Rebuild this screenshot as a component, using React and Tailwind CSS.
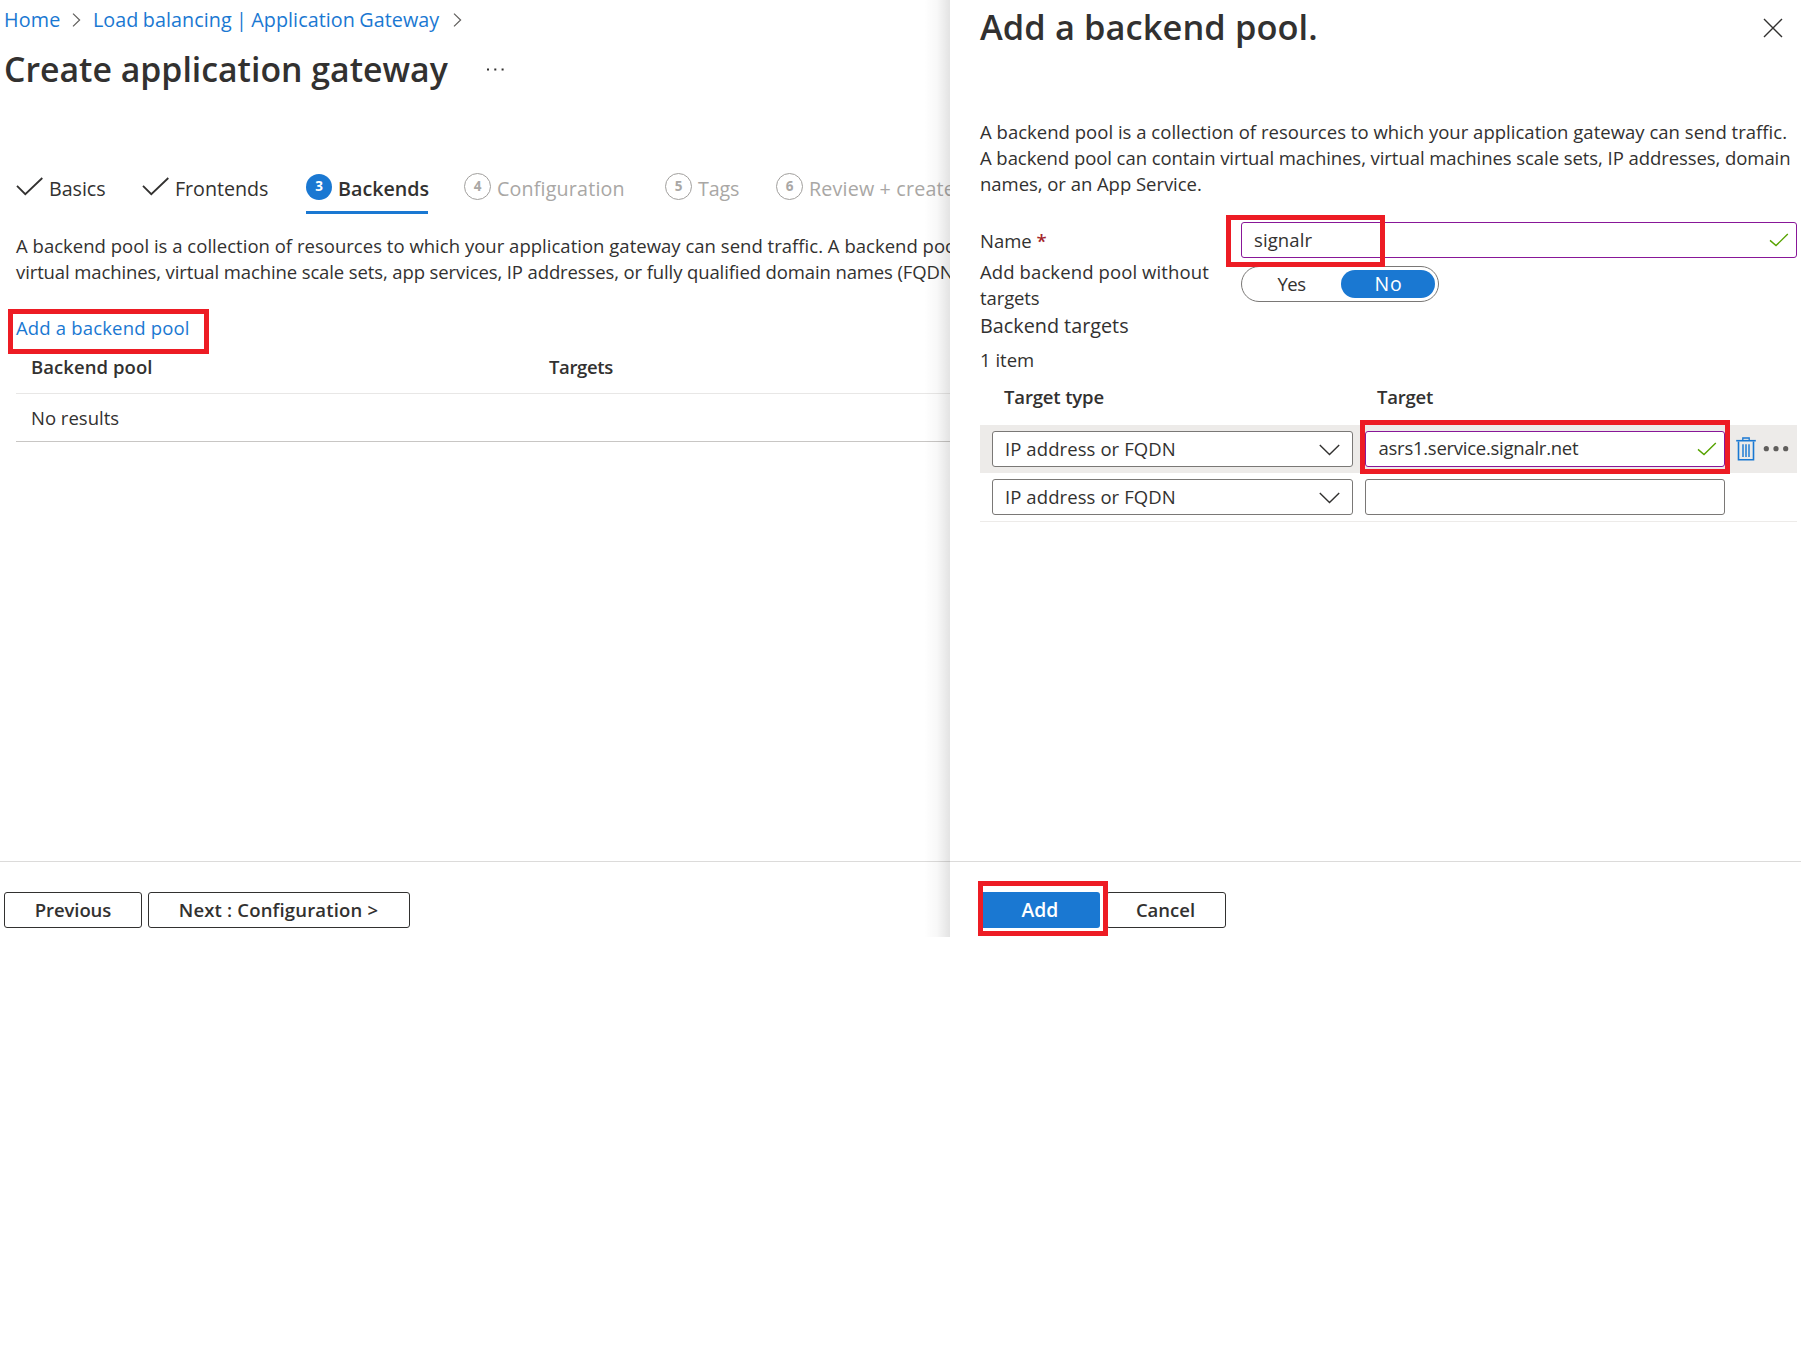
const tabBase = "flex h-[40px] shrink-0 items-start whitespace-nowrap text-[19.7px] leading-[28px]";

function Tick() {
  return (
    <svg className="mt-[3px] h-[19px] w-[28px] shrink-0" viewBox="0 0 28 19" fill="none" stroke="#323130" strokeWidth="1.8">
      <path d="M1 8.8 9.3 17.2 26.3 1" />
    </svg>
  );
}

function ValidTick() {
  return (
    <svg className="h-[14px] w-[20px] shrink-0" viewBox="0 0 20 14" fill="none" stroke="#57a300" strokeWidth="1.4">
      <path d="M1 7.4 7 12.6 18.8 1" />
    </svg>
  );
}

function CrumbChevron({ className }) {
  return (
    <svg className={"h-[14px] w-[9px] shrink-0 " + className} viewBox="0 0 9 14" fill="none" stroke="#605e5c" strokeWidth="1.2">
      <path d="M1 .6 7.6 7 1 13.4" />
    </svg>
  );
}

function StepNumber({ n }) {
  return (
    <span className="-mt-px flex h-[27px] w-[27px] shrink-0 items-center justify-center rounded-full border border-[#a19f9d] text-[13.5px] font-bold leading-none text-[#a9a7a5]">
      {n}
    </span>
  );
}

function TypeSelect() {
  return (
    <div className="flex h-[36px] w-[361px] shrink-0 items-center justify-between rounded-[3px] border border-[#7a7876] bg-white pl-[12px] pr-[12px]">
      <span className="tracking-[0.09px]">IP address or FQDN</span>
      <svg className="mt-px h-[12px] w-[21px]" viewBox="0 0 21 12" fill="none" stroke="#323130" strokeWidth="1.4">
        <path d="M.8 1 10.5 10.5 20.2 1" />
      </svg>
    </div>
  );
}

function Highlight({ className }) {
  return <div className={"pointer-events-none absolute z-20 border-[5px] border-[#ed1c24] " + className} />;
}

function GatewayPage() {
  return (
    <main className="relative flex h-full w-[950px] shrink-0 flex-col overflow-hidden">
      <nav className="mt-[7px] flex h-[26px] items-center pl-[4px] text-[19.75px] leading-[26px] text-[#1a78d2]">
        <span className="w-[57px] tracking-[0.2px]">Home</span>
        <CrumbChevron className="ml-[11px] mr-[12px]" />
        <span className="w-[350px] whitespace-nowrap [word-spacing:-0.9px] tracking-[0.06px]">Load balancing | Application Gateway</span>
        <CrumbChevron className="ml-[10px]" />
      </nav>
      <div className="mt-[12px] flex h-[48px] pl-[4px]">
        <h1 className="w-[483px] text-[33.8px] font-[570] leading-[48px]">Create application gateway</h1>
        <svg className="mt-[23px] h-[3px] w-[18px]" viewBox="0 0 18 3" fill="#323130">
          <path d="M0 .5h2v2H0zM7.3.5h2v2h-2zM14.6.5h2v2h-2z" />
        </svg>
      </div>

      <div className="mt-[81px] flex pl-[16px]">
        <div className={tabBase + " w-[126px]"}>
          <Tick />
          <span className="ml-[5px] mt-px tracking-[-0.05px]">Basics</span>
        </div>
        <div className={tabBase + " w-[164px]"}>
          <Tick />
          <span className="ml-[5px] mt-px tracking-[-0.05px]">Frontends</span>
        </div>
        <div className={tabBase + " mr-[36px] w-[122px] border-b-[3px] border-[#1a78d2] font-[570]"}>
          <span className="flex h-[26px] w-[26px] shrink-0 items-center justify-center rounded-full bg-[#1a78d2] text-[13.5px] font-bold leading-none text-white">
            3
          </span>
          <span className="ml-[6px] mt-px">Backends</span>
        </div>
        <div className={tabBase + " w-[201px] text-[#a9a7a5]"}>
          <StepNumber n="4" />
          <span className="ml-[6px] mt-px tracking-[0.17px]">Configuration</span>
        </div>
        <div className={tabBase + " w-[111px] text-[#a9a7a5]"}>
          <StepNumber n="5" />
          <span className="ml-[6px] mt-px tracking-[-0.15px]">Tags</span>
        </div>
        <div className={tabBase + " text-[#a9a7a5]"}>
          <StepNumber n="6" />
          <span className="ml-[6px] mt-px tracking-[0.17px]">Review + create</span>
        </div>
      </div>

      <div className="flex grow flex-col pl-[16px]">
        <p className="mt-[19px] whitespace-nowrap">
          <span className="block tracking-[0.02px]">
            A backend pool is a collection of resources to which your application gateway can send traffic. A backend pool
          </span>
          <span className="block tracking-[-0.115px]">
            virtual machines, virtual machine scale sets, app services, IP addresses, or fully qualified domain names (FQDN)
          </span>
        </p>
        <a className="mt-[30px] block w-fit tracking-[0.17px] text-[#1a78d2]">Add a backend pool</a>
        <div className="mt-[13px] flex h-[40px] border-b border-[#e8e7e6] font-[570]">
          <span className="w-[533px] pl-[15px] tracking-[0.07px]">Backend pool</span>
          <span className="tracking-[-0.36px]">Targets</span>
        </div>
        <div className="flex h-[48px] items-center border-b border-[#c8c6c4] pl-[15px]">No results</div>
      </div>

      <footer className="flex h-[76px] shrink-0 gap-[6px] border-t border-[#dcdbda] pl-[4px] pt-[30px]">
        <button className="flex h-[36px] w-[138px] items-center justify-center rounded-[3px] border border-[#323130] font-[570] tracking-[-0.1px]">
          Previous
        </button>
        <button className="flex h-[36px] w-[262px] items-center justify-center rounded-[3px] border border-[#323130] pr-px font-[570] tracking-[0.18px]">
          Next : Configuration &gt;
        </button>
      </footer>

      <div className="absolute inset-y-0 right-0 w-[26px] bg-linear-to-r from-black/0 via-black/[0.03] to-black/[0.11]" />
      <Highlight className="left-[8px] top-[309px] h-[45px] w-[201px]" />
    </main>
  );
}

function BackendPoolPanel() {
  return (
    <aside className="relative flex h-full w-[851px] shrink-0 flex-col bg-white">
      <div className="flex grow flex-col pl-[30px] pr-[4px]">
        <div className="mt-[3px] flex h-[48px] justify-between">
          <h2 className="text-[34.4px] font-[570] leading-[48px] tracking-[0.1px]">Add a backend pool.</h2>
          <svg className="mr-[14px] mt-[15px] h-[20px] w-[20px]" viewBox="0 0 20 20" fill="none" stroke="#323130" strokeWidth="1.4">
            <path d="M1 1 19 19M19 1 1 19" />
          </svg>
        </div>
        <p className="mt-[68px] whitespace-nowrap">
          <span className="block tracking-[0.02px]">
            A backend pool is a collection of resources to which your application gateway can send traffic.
          </span>
          <span className="block tracking-[-0.065px]">
            A backend pool can contain virtual machines, virtual machines scale sets, IP addresses, domain
          </span>
          <span className="block tracking-[-0.04px]">names, or an App Service.</span>
        </p>

        <div className="mt-[25px] flex h-[36px]">
          <label className="w-[261px] pt-[6px]">
            Name <span className="font-semibold text-[#a4262c]">*</span>
          </label>
          <div className="flex grow items-center justify-between rounded-[3px] border border-[#881798] pl-[12px] pr-[7px]">
            <span className="tracking-[0.1px]">signalr</span>
            <ValidTick />
          </div>
        </div>

        <div className="mt-px flex h-[52px]">
          <label className="w-[261px] whitespace-nowrap tracking-[0.11px]">
            Add backend pool without
            <br />
            <span className="tracking-[-0.1px]">targets</span>
          </label>
          <div className="mt-[7px] flex h-[36px] w-[198px] items-center rounded-full border border-[#7a7876] pr-[3px]">
            <span className="flex w-[99px] justify-center tracking-[-0.5px]">Yes</span>
            <span className="flex h-[28px] w-[94px] items-center justify-center rounded-full bg-[#1a78d2] pl-px text-[19.5px] tracking-[0.8px] text-white">
              No
            </span>
          </div>
        </div>

        <div className="mt-[2px] text-[19.8px]">Backend targets</div>
        <div className="mt-[8px]">1 item</div>

        <div className="mt-[11px] flex h-[41px] font-[570]">
          <span className="w-[397px] pl-[24px] tracking-[-0.15px]">Target type</span>
          <span className="tracking-[-0.2px]">Target</span>
        </div>
        <div className="flex h-[48px] items-center bg-[#edebe9] pl-[12px]">
          <TypeSelect />
          <div className="ml-[12px] flex h-[36px] w-[360px] items-center justify-between rounded-[3px] border border-[#881798] bg-white pl-[12.5px] pr-[7px]">
            <span className="-mt-[2px] tracking-[-0.26px]">asrs1.service.signalr.net</span>
            <ValidTick />
          </div>
          <svg className="ml-[11px] h-[24px] w-[20px]" viewBox="0 0 20 24" fill="none" stroke="#1a78d2">
            <path d="M2.5 4.5v18.2h15V4.5" strokeWidth="1.6" />
            <path d="M.2 3.7h19.6" strokeWidth="1.6" />
            <path d="M6.8 3.5V1h6.4v2.5" strokeWidth="1.3" />
            <path d="M7 7.3v12.6M10 7.3v12.6M13 7.3v12.6" strokeWidth="1.7" strokeOpacity=".85" />
          </svg>
          <svg className="ml-[7px] h-[6px] w-[26px]" viewBox="0 0 26 6" fill="#605e5c">
            <circle cx="3.3" cy="2.7" r="2.6" />
            <circle cx="13" cy="2.7" r="2.6" />
            <circle cx="22.7" cy="2.7" r="2.6" />
          </svg>
        </div>
        <div className="flex h-[49px] border-b border-[#edebe9] pl-[12px] pt-[6px]">
          <TypeSelect />
          <div className="ml-[12px] h-[36px] w-[360px] rounded-[3px] border border-[#7a7876]" />
        </div>
      </div>

      <footer className="flex h-[76px] shrink-0 gap-[6px] border-t border-[#dcdbda] pl-[30px] pt-[30px]">
        <button className="flex h-[36px] w-[120px] items-center justify-center rounded-[3px] bg-[#1a78d2] text-[19.3px] font-[570] text-white">
          Add
        </button>
        <button className="flex h-[36px] w-[120px] items-center justify-center rounded-[3px] border border-[#323130] pr-px font-[570]">
          Cancel
        </button>
      </footer>

      <Highlight className="left-[276px] top-[215px] h-[52px] w-[159px]" />
      <Highlight className="left-[410px] top-[420px] h-[54px] w-[370px]" />
      <Highlight className="left-[28px] top-[881px] h-[55px] w-[130px]" />
    </aside>
  );
}

export default function App() {
  return (
    <div className="min-h-[1363px] w-[1801px] bg-white">
      <div className="flex h-[937px] overflow-hidden font-['Open_Sans','Noto_Sans',sans-serif] text-[18.5px] leading-[26px] text-[#323130]">
        <GatewayPage />
        <BackendPoolPanel />
      </div>
    </div>
  );
}
